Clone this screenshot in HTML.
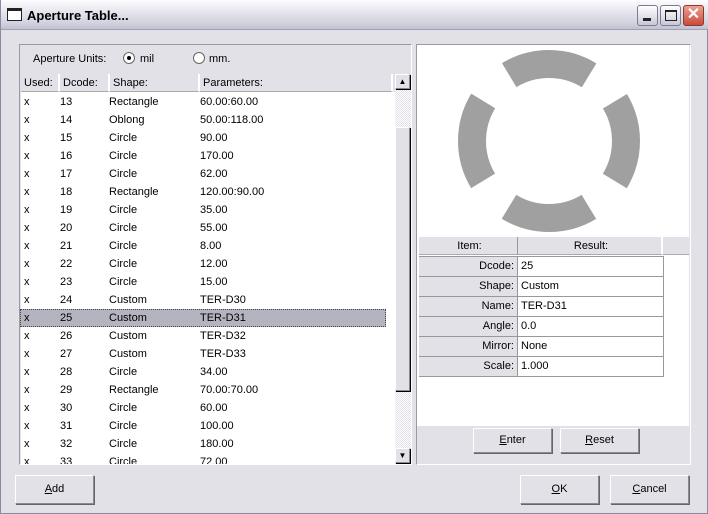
<!DOCTYPE html>
<html><head><style>
*{margin:0;padding:0;box-sizing:border-box}
body{width:708px;height:514px;overflow:hidden;font-family:"Liberation Sans",sans-serif;font-size:11px;color:#000;background:#fff}
.win{position:absolute;left:0;top:0;width:708px;height:514px;background:#e2e1e8;border:1px solid #8a8aa0;border-top:none}
.title{position:absolute;left:0;top:0;width:708px;height:30px;background:linear-gradient(#fdfdff,#e6e6ee 40%,#d2d2de 80%,#c0c0d0);border-bottom:1px solid #a0a0b8}
.title span{position:absolute;left:26px;top:8px;font-weight:bold;font-size:13px;color:#000}
.ticon{position:absolute;left:6px;top:8px;width:15px;height:13px;border:1px solid #222;background:#fff;border-top:3px solid #222}
.tb{position:absolute;top:5px;width:21px;height:21px;border-radius:3px;border:1px solid #7a7a90;background:linear-gradient(#fff,#c8c8d6)}
.abs{position:absolute}
.panel{position:absolute;border:1px solid #9a9aa6;border-right-color:#fff;border-bottom-color:#fff}
.row{position:absolute;left:20px;width:366px;height:18px;line-height:18px}
.row span{position:absolute}
.hdr{position:absolute;top:74px;height:18px;line-height:18px;background:#e2e1e8;border-right:2px solid #fff;border-bottom:1px solid #aaa;padding-left:3px}
.btn{position:absolute;border:1px solid #8a8a96;border-top-color:#fff;border-left-color:#fff;background:#e2e1e8;text-align:center;font-size:11px}
.btn{box-shadow:1px 1px 0 #666}
.tr{position:absolute;left:418px;width:245px;height:20px;line-height:19px;border-bottom:1px solid #999}
.tr .k{position:absolute;left:0;width:99px;height:19px;background:#e2e1e8;border-right:1px solid #999;text-align:right;padding-right:3px}
.tr .v{position:absolute;left:101px;padding-left:1px}
</style></head><body>
<div class="win">
<div class="title"><div class="ticon"></div><span>Aperture Table...</span>
<div class="tb" style="left:636px"><div class="abs" style="left:5px;top:12px;width:8px;height:3px;background:#222"></div></div>
<div class="tb" style="left:659px"><div class="abs" style="left:4px;top:4px;width:12px;height:11px;border:1px solid #222;border-top-width:2px"></div></div>
<div class="tb" style="left:682px;background:linear-gradient(#f0a090,#c84a3a);border-color:#8a3a30;color:#fff;font-size:16px;line-height:18px;text-align:center;font-weight:bold">✕</div>
</div>

<div class="panel" style="left:18px;top:44px;width:393px;height:421px;background:#e2e1e8"></div>
<div class="abs" style="left:32px;top:53px">Aperture Units:</div>
<div class="abs" style="left:122px;top:52px;width:12px;height:12px;border-radius:50%;background:#fff;border:1px solid #666"><div class="abs" style="left:3px;top:3px;width:4px;height:4px;border-radius:50%;background:#000"></div></div>
<div class="abs" style="left:139px;top:53px">mil</div>
<div class="abs" style="left:192px;top:52px;width:12px;height:12px;border-radius:50%;background:#fff;border:1px solid #666"></div>
<div class="abs" style="left:208px;top:53px">mm.</div>
<div class="abs" style="left:20px;top:92px;width:374px;height:372px;background:#fff;overflow:hidden"></div>
<div class="hdr" style="left:20px;width:39px">Used:</div>
<div class="hdr" style="left:59px;width:50px">Dcode:</div>
<div class="hdr" style="left:109px;width:90px">Shape:</div>
<div class="hdr" style="left:199px;width:193px">Parameters:</div>
<div class="abs" style="left:394px;top:74px;width:16px;height:390px;background:repeating-conic-gradient(#e2e1e8 0 25%,#fff 0 50%) 0 0/2px 2px"></div>
<div class="btn" style="left:394px;top:74px;width:15px;height:15px;box-shadow:1px 1px 0 #000;font-size:8px;line-height:14px">▲</div>
<div class="btn" style="left:394px;top:127px;width:15px;height:264px;box-shadow:1px 1px 0 #000"></div>
<div class="btn" style="left:394px;top:448px;width:15px;height:15px;box-shadow:1px 1px 0 #000;font-size:8px;line-height:14px">▼</div>

<div class="panel" style="left:415px;top:44px;width:275px;height:421px;background:#e2e1e8"></div>
<div class="abs" style="left:416px;top:45px;width:272px;height:191px;background:#fff"></div>
<svg class="abs" style="left:416px;top:45px" width="272" height="191"><circle cx="132" cy="96" r="77" fill="none" stroke="#a0a0a0" stroke-width="28" stroke-dasharray="84 36.96" stroke-dashoffset="42"/></svg>
<div class="abs" style="left:416px;top:236px;width:272px;height:190px;background:#fff"></div>
<div class="hdr" style="left:418px;top:237px;width:99px;text-align:center;border-right:1px solid #999">Item:</div>
<div class="hdr" style="left:517px;top:237px;width:145px;text-align:center">Result:</div>
<div class="hdr" style="left:662px;top:237px;width:26px;border-right:none"></div>
<div class="abs" style="left:418px;top:256px;width:245px;height:121px;border-top:1px solid #999;border-right:1px solid #999;border-left:1px solid #999"></div>
<div class="tr" style="top:257px"><div class="k">Dcode:</div><div class="v">25</div></div>
<div class="tr" style="top:277px"><div class="k">Shape:</div><div class="v">Custom</div></div>
<div class="tr" style="top:297px"><div class="k">Name:</div><div class="v">TER-D31</div></div>
<div class="tr" style="top:317px"><div class="k">Angle:</div><div class="v">0.0</div></div>
<div class="tr" style="top:337px"><div class="k">Mirror:</div><div class="v">None</div></div>
<div class="tr" style="top:357px"><div class="k">Scale:</div><div class="v">1.000</div></div>
<div class="btn" style="left:472px;top:428px;width:79px;height:25px;line-height:23px"><u>E</u>nter</div>
<div class="btn" style="left:559px;top:428px;width:79px;height:25px;line-height:23px"><u>R</u>eset</div>

<div class="btn" style="left:14px;top:475px;width:79px;height:29px;line-height:27px"><u>A</u>dd</div>
<div class="btn" style="left:519px;top:475px;width:79px;height:29px;line-height:27px"><u>O</u>K</div>
<div class="btn" style="left:609px;top:475px;width:79px;height:29px;line-height:27px"><u>C</u>ancel</div>
</div>
<div style="position:absolute;left:20px;top:92px;width:374px;height:372px;overflow:hidden">
<div class="row" style="left:0;top:1px"><span style="left:4px">x</span><span style="left:40px">13</span><span style="left:89px">Rectangle</span><span style="left:180px">60.00:60.00</span></div>
<div class="row" style="left:0;top:19px"><span style="left:4px">x</span><span style="left:40px">14</span><span style="left:89px">Oblong</span><span style="left:180px">50.00:118.00</span></div>
<div class="row" style="left:0;top:37px"><span style="left:4px">x</span><span style="left:40px">15</span><span style="left:89px">Circle</span><span style="left:180px">90.00</span></div>
<div class="row" style="left:0;top:55px"><span style="left:4px">x</span><span style="left:40px">16</span><span style="left:89px">Circle</span><span style="left:180px">170.00</span></div>
<div class="row" style="left:0;top:73px"><span style="left:4px">x</span><span style="left:40px">17</span><span style="left:89px">Circle</span><span style="left:180px">62.00</span></div>
<div class="row" style="left:0;top:91px"><span style="left:4px">x</span><span style="left:40px">18</span><span style="left:89px">Rectangle</span><span style="left:180px">120.00:90.00</span></div>
<div class="row" style="left:0;top:109px"><span style="left:4px">x</span><span style="left:40px">19</span><span style="left:89px">Circle</span><span style="left:180px">35.00</span></div>
<div class="row" style="left:0;top:127px"><span style="left:4px">x</span><span style="left:40px">20</span><span style="left:89px">Circle</span><span style="left:180px">55.00</span></div>
<div class="row" style="left:0;top:145px"><span style="left:4px">x</span><span style="left:40px">21</span><span style="left:89px">Circle</span><span style="left:180px">8.00</span></div>
<div class="row" style="left:0;top:163px"><span style="left:4px">x</span><span style="left:40px">22</span><span style="left:89px">Circle</span><span style="left:180px">12.00</span></div>
<div class="row" style="left:0;top:181px"><span style="left:4px">x</span><span style="left:40px">23</span><span style="left:89px">Circle</span><span style="left:180px">15.00</span></div>
<div class="row" style="left:0;top:199px"><span style="left:4px">x</span><span style="left:40px">24</span><span style="left:89px">Custom</span><span style="left:180px">TER-D30</span></div>
<div class="row" style="left:0;top:217px;background:#b4b4c0;outline:1px dotted #444;outline-offset:-1px"><span style="left:4px">x</span><span style="left:40px">25</span><span style="left:89px">Custom</span><span style="left:180px">TER-D31</span></div>
<div class="row" style="left:0;top:235px"><span style="left:4px">x</span><span style="left:40px">26</span><span style="left:89px">Custom</span><span style="left:180px">TER-D32</span></div>
<div class="row" style="left:0;top:253px"><span style="left:4px">x</span><span style="left:40px">27</span><span style="left:89px">Custom</span><span style="left:180px">TER-D33</span></div>
<div class="row" style="left:0;top:271px"><span style="left:4px">x</span><span style="left:40px">28</span><span style="left:89px">Circle</span><span style="left:180px">34.00</span></div>
<div class="row" style="left:0;top:289px"><span style="left:4px">x</span><span style="left:40px">29</span><span style="left:89px">Rectangle</span><span style="left:180px">70.00:70.00</span></div>
<div class="row" style="left:0;top:307px"><span style="left:4px">x</span><span style="left:40px">30</span><span style="left:89px">Circle</span><span style="left:180px">60.00</span></div>
<div class="row" style="left:0;top:325px"><span style="left:4px">x</span><span style="left:40px">31</span><span style="left:89px">Circle</span><span style="left:180px">100.00</span></div>
<div class="row" style="left:0;top:343px"><span style="left:4px">x</span><span style="left:40px">32</span><span style="left:89px">Circle</span><span style="left:180px">180.00</span></div>
<div class="row" style="left:0;top:361px"><span style="left:4px">x</span><span style="left:40px">33</span><span style="left:89px">Circle</span><span style="left:180px">72.00</span></div>
</div>
</body></html>
